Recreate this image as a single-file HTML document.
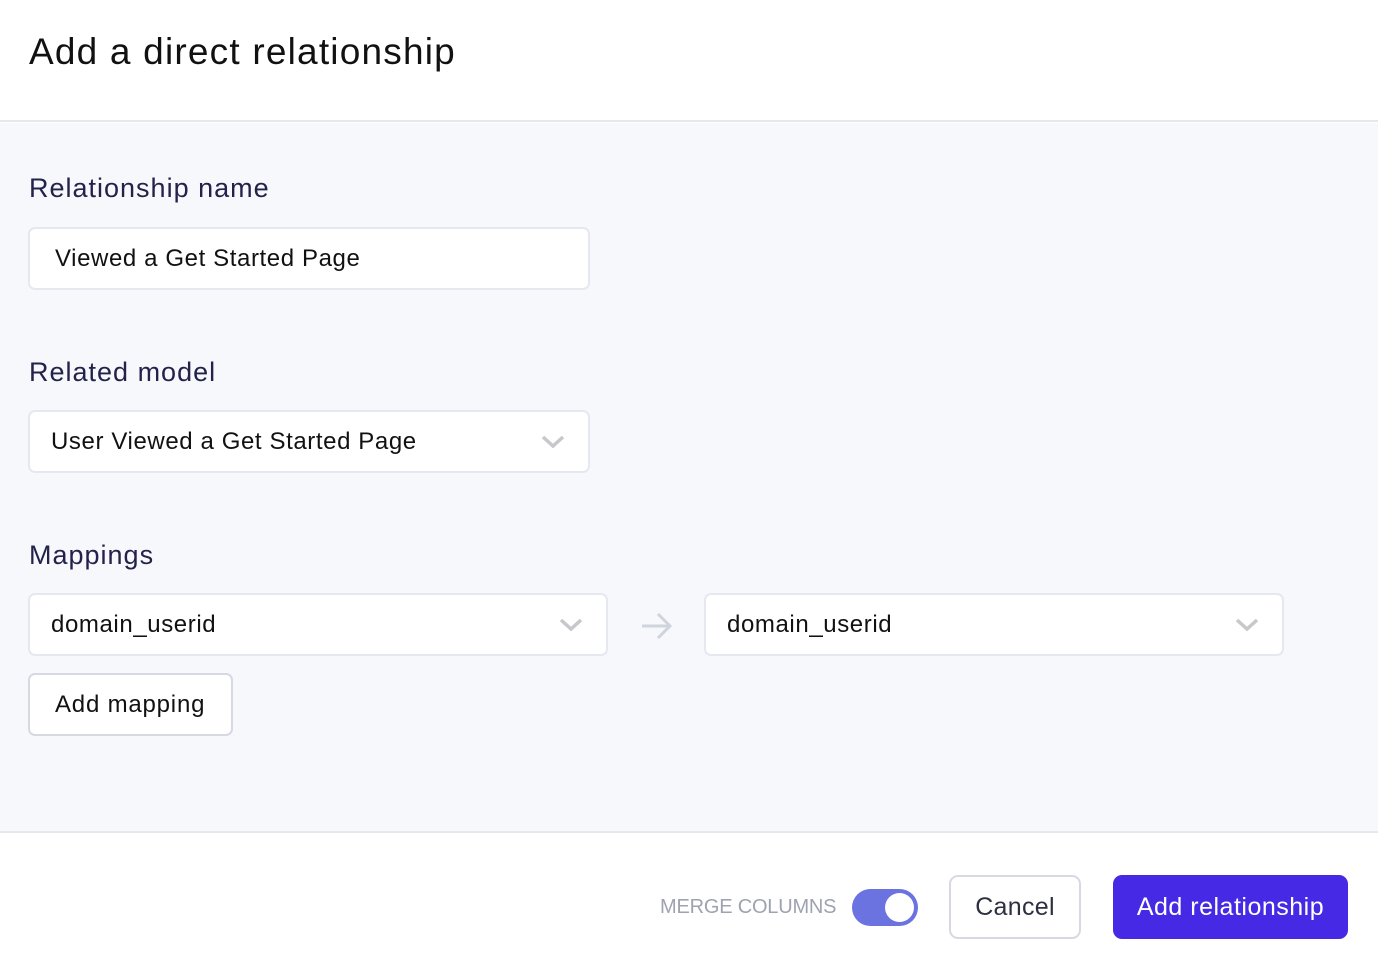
<!DOCTYPE html>
<html><head><style>
*{box-sizing:border-box;margin:0;padding:0}
body{width:1378px;height:970px;font-family:"Liberation Sans",sans-serif;background:#fff;position:relative;overflow:hidden}
.hdr{position:absolute;left:0;top:0;width:1378px;height:122px;background:#fff;border-bottom:2px solid #e6e8ef}
.hdr h1{position:absolute;left:29px;top:31px;font-size:37px;font-weight:500;color:#111;letter-spacing:1.2px}
.main{position:absolute;left:0;top:123px;width:1378px;height:710px;background:#f7f8fc;border-bottom:2px solid #e6e8ef}
.lbl{position:absolute;left:29px;font-size:27px;color:#23224a;letter-spacing:1px}
.box{position:absolute;background:#fff;border:2px solid #e6e8ef;border-radius:7px;height:63px;font-size:24px;color:#111;line-height:59px;padding-left:21px;letter-spacing:0.6px}
.chev{position:absolute;right:22px;top:22px}
.foot{position:absolute;left:0;top:835px;width:1378px;height:135px;background:#fff}
</style></head><body>
<div class="hdr"><h1>Add a direct relationship</h1></div>
<div class="main">
<div class="lbl" style="top:50px">Relationship name</div>
<div class="box" style="left:28px;top:104px;width:562px;padding-left:25px">Viewed a Get Started Page</div>
<div class="lbl" style="top:234px">Related model</div>
<div class="box" style="left:28px;top:287px;width:562px">User Viewed a Get Started Page<svg class="chev" width="26" height="16" viewBox="0 0 26 16"><path d="M3 3l10 9 10-9" stroke="#c8c8cc" stroke-width="3.5" fill="none"/></svg></div>
<div class="lbl" style="top:417px">Mappings</div>
<div class="box" style="left:28px;top:470px;width:580px">domain_userid<svg class="chev" width="26" height="16" viewBox="0 0 26 16"><path d="M3 3l10 9 10-9" stroke="#c8c8cc" stroke-width="3.5" fill="none"/></svg></div>
<svg style="position:absolute;left:640px;top:488px" width="34" height="30" viewBox="0 0 34 30"><path d="M2 15h28M18 3l12 12-12 12" stroke="#d0d4de" stroke-width="3" fill="none"/></svg>
<div class="box" style="left:704px;top:470px;width:580px">domain_userid<svg class="chev" width="26" height="16" viewBox="0 0 26 16"><path d="M3 3l10 9 10-9" stroke="#c8c8cc" stroke-width="3.5" fill="none"/></svg></div>
<div class="box" style="left:28px;top:550px;width:205px;padding-left:25px;border-color:#d6d9e2;letter-spacing:0.8px">Add mapping</div>
</div>
<div class="foot">
<div style="position:absolute;left:660px;top:61px;font-size:20px;color:#9ea3b0;letter-spacing:-0.2px">MERGE COLUMNS</div>
<div style="position:absolute;left:852px;top:54px;width:66px;height:37px;border-radius:19px;background:#6a73e0"><div style="position:absolute;right:4px;top:4px;width:29px;height:29px;border-radius:50%;background:#fff"></div></div>
<div style="position:absolute;left:949px;top:40px;width:132px;height:64px;border:2px solid #d6d9e2;border-radius:9px;font-size:25px;color:#2c3040;text-align:center;line-height:60px;letter-spacing:0.3px">Cancel</div>
<div style="position:absolute;left:1113px;top:40px;width:235px;height:64px;background:#4629e4;border-radius:9px;font-size:25px;color:#fff;text-align:center;line-height:64px;letter-spacing:0.5px">Add relationship</div>
</div>
</body></html>
